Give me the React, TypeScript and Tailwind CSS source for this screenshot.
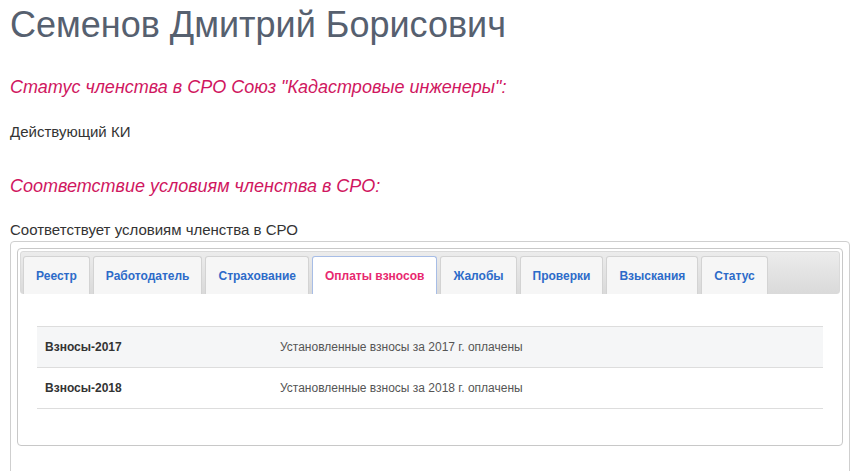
import { useState } from 'react';

const tabs = [
  'Реестр',
  'Работодатель',
  'Страхование',
  'Оплаты взносов',
  'Жалобы',
  'Проверки',
  'Взыскания',
  'Статус',
];

const payments = [
  { name: 'Взносы-2017', note: 'Установленные взносы за 2017 г. оплачены' },
  { name: 'Взносы-2018', note: 'Установленные взносы за 2018 г. оплачены' },
];

export default function App() {
  const [active, setActive] = useState('Оплаты взносов');

  return (
    <div className="min-h-screen bg-white px-[10px] pr-[8px] font-['Liberation_Sans',Arial,sans-serif] text-[#333]">
      <h1 className="mt-[5px] text-[36px] leading-[40px] font-normal text-[#56606f]">
        Семенов Дмитрий Борисович
      </h1>

      <h3 className="mt-[32px] text-[18px] leading-[20px] italic text-[#d0175f]">
        Статус членства в СРО Союз "Кадастровые инженеры":
      </h3>
      <p className="mt-[25px] text-[15px] leading-[20px]">Действующий КИ</p>

      <h3 className="mt-[34px] text-[18px] leading-[20px] italic text-[#d0175f]">
        Соответствие условиям членства в СРО:
      </h3>
      <p className="mt-[24px] text-[15px] leading-[20px]">Соответствует условиям членства в СРО</p>

      {/* outer frame around the tabs widget */}
      <div className="mt-[1px] min-h-[240px] rounded-[4px] border border-[#cfcfcf] px-[6px] pt-[6px]">
        <div className="rounded-[4px] border border-[#c8c8c8] bg-white p-[2px]">
          {/* tab strip */}
          <ul className="flex gap-[3px] rounded-[3px] border border-[#dadada] bg-gradient-to-b from-[#ececec] to-[#dadada] px-[2px] pt-[4px]">
            {tabs.map((t) => {
              const on = t === active;
              return (
                <li
                  key={t}
                  onClick={() => setActive(t)}
                  className={
                    on
                      ? 'mb-[-1px] flex h-[38px] cursor-pointer items-center rounded-t-[3px] border border-b-0 border-[#a7bde6] bg-white px-[12px] text-[12px] font-bold text-[#e8286f]'
                      : 'mb-[-1px] flex h-[38px] cursor-pointer items-center rounded-t-[3px] border border-b-0 border-[#d3d3d3] bg-[#f6f6f6] px-[12px] text-[12px] font-bold text-[#2d6bc9]'
                  }
                >
                  {t}
                </li>
              );
            })}
          </ul>

          {/* active panel */}
          <div className="px-[17px] pt-[32px] pb-[34px]">
            <table className="w-full border-collapse text-[12px]">
              <tbody>
                {payments.map((p, i) => (
                  <tr
                    key={p.name}
                    className={
                      i % 2 === 0
                        ? 'h-[41px] border-t border-b border-[#dddddd] bg-[#f5f6f7]'
                        : 'h-[41px] border-t border-b border-[#dddddd] bg-white'
                    }
                  >
                    <td className="w-[243px] px-[8px] font-bold text-[#333]">{p.name}</td>
                    <td className="px-[0px] text-[#555]">{p.note}</td>
                  </tr>
                ))}
              </tbody>
            </table>
          </div>
        </div>
      </div>
    </div>
  );
}
